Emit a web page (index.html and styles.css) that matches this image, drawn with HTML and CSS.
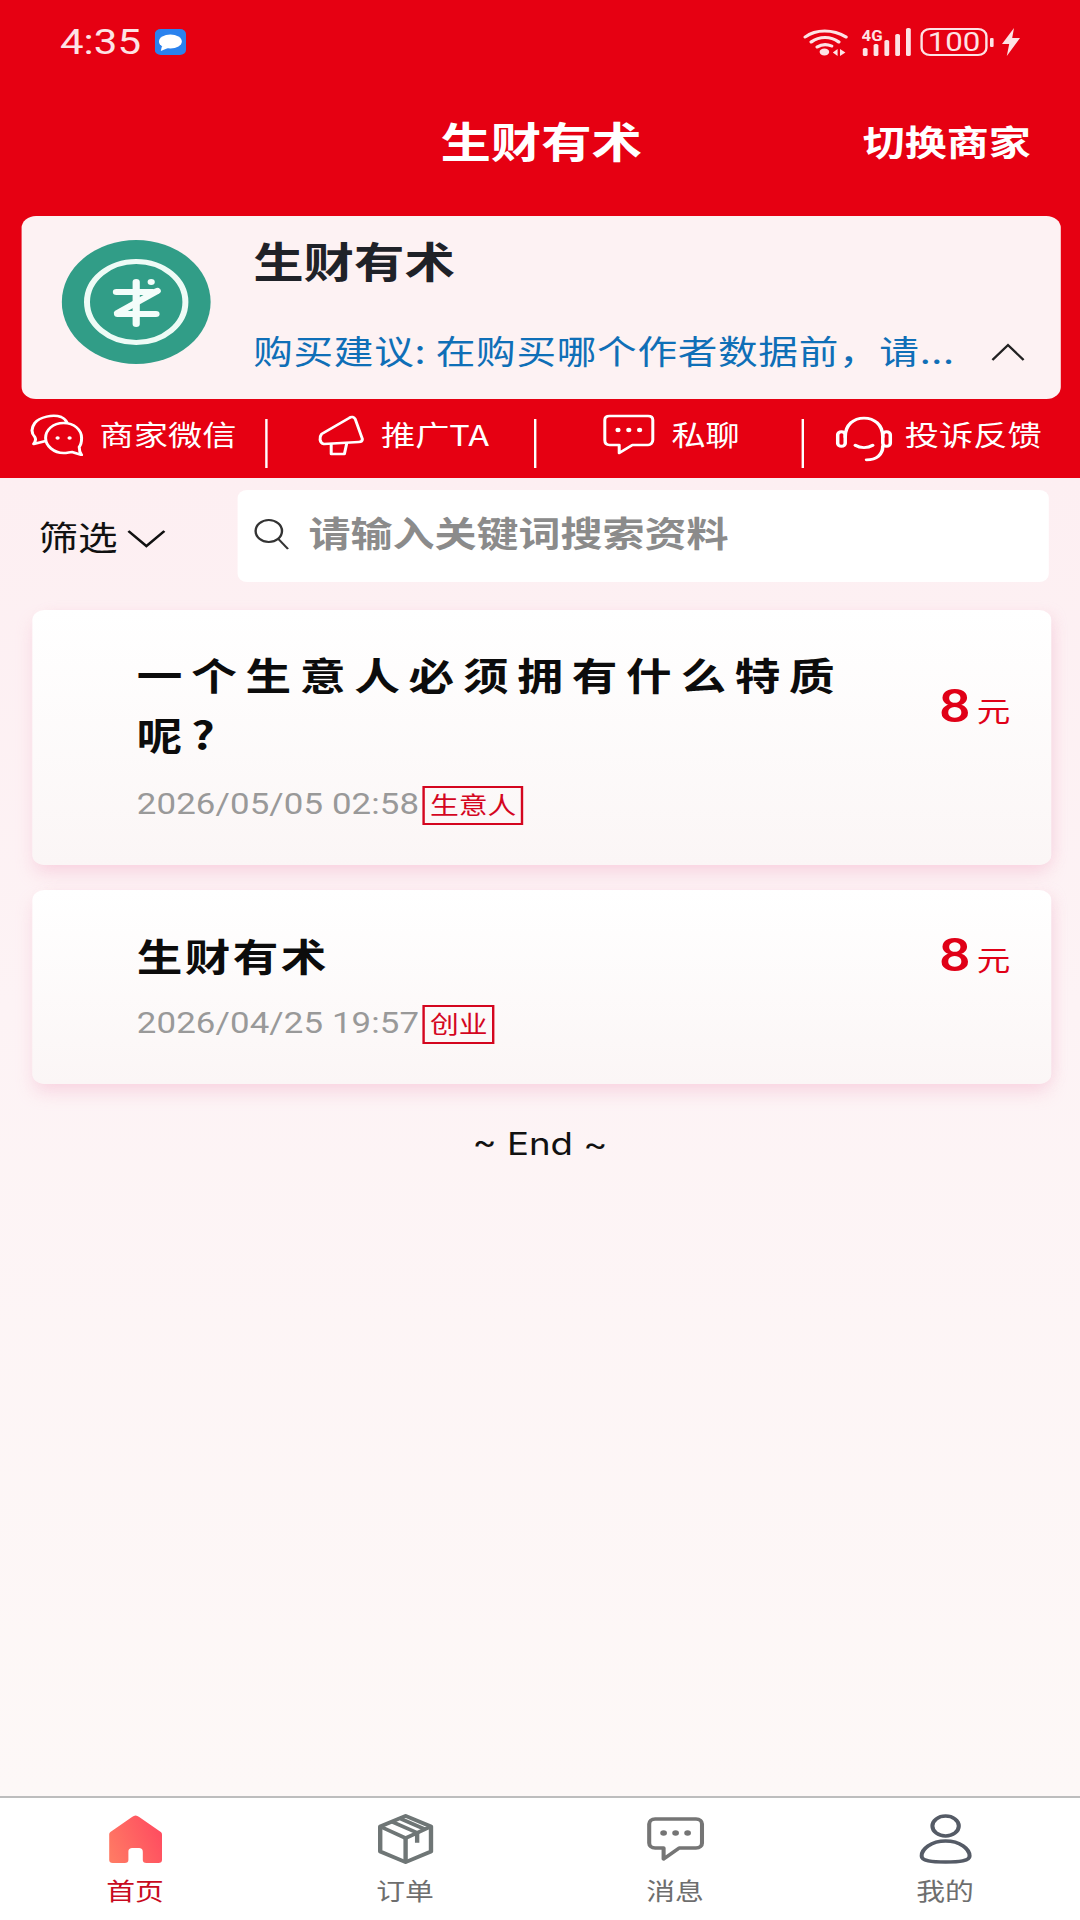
FILE: index.html
```html
<!DOCTYPE html>
<html lang="zh">
<head>
<meta charset="utf-8">
<title>生财有术</title>
<link rel="stylesheet" href="styles.css">
</head>
<body>
<div class="stage">
  <header class="top">
    <div class="status">
      <div class="status-left">
        <span class="time">4:35</span>
        <svg class="msg" viewBox="0 0 26 26"><rect width="26" height="26" rx="5" fill="#2a82ee"/><ellipse cx="13" cy="12.5" rx="9.5" ry="7" fill="#fff"/><path d="M6 17 L5 22 L11 19Z" fill="#fff"/></svg>
      </div>
      <div class="status-right">
        <svg class="wifi" viewBox="0 0 38 28" fill="none" stroke="#fde3e5" stroke-linecap="round"><path d="M2 9 C11 1 25 1 36 9" stroke-width="3"/><path d="M7 14 C14 8 23 8 30 14" stroke-width="3"/><path d="M12 19 C16 16 20 16 24 18" stroke-width="3"/><ellipse cx="18" cy="24" rx="4" ry="3.4" fill="#fde3e5" stroke="none"/><path d="M29 21 L25 24.500 L29 28Z M31 21 L35.500 24.500 L31 28Z" fill="#fde3e5" stroke="none"/></svg>
        <svg class="signal" viewBox="0 0 44 28"><text x="0" y="13" class="sig-text">4G</text><rect x="1" y="20" width="4" height="8" rx="1.500" fill="#fde3e5"/><rect x="10" y="16" width="4" height="12" rx="1.500" fill="#fde3e5"/><rect x="19" y="12" width="4" height="16" rx="1.500" fill="#fde3e5"/><rect x="28" y="6" width="4" height="22" rx="1.500" fill="#fde3e5"/><rect x="37" y="0" width="4" height="28" rx="1.500" fill="#fde3e5"/></svg>
        <div class="battery"><span class="battery-num">100</span></div>
        <span class="nub"></span>
        <svg class="bolt" viewBox="0 0 15 28"><path d="M10 0 L0 16 L6 16 L4 28 L15 10 L8.500 10Z" fill="#fde3e5"/></svg>
      </div>
    </div>
    <div class="nav">
      <span></span>
      <h1 class="nav-title">生财有术</h1>
      <span class="nav-switch">切换商家</span>
    </div>
    <section class="shop">
      <svg class="logo" viewBox="0 0 125 124">
        <circle cx="62.500" cy="62" r="62" fill="#319d87"/>
        <ellipse cx="62.500" cy="62" rx="41" ry="40.500" fill="none" stroke="#eefbf6" stroke-width="5"/>
        <g stroke="#f3fdfa" stroke-width="6" stroke-linecap="round" fill="none">
          <path d="M46 52 H76"/><path d="M47 74 H79"/><path d="M62.500 42 V84"/><path d="M80 51 L47 73"/>
        </g>
        <circle cx="75" cy="42" r="3" fill="#f3fdfa"/>
      </svg>
      <div class="shop-body">
        <h2 class="shop-name">生财有术</h2>
        <div class="shop-desc-row">
          <span class="shop-desc">购买建议: 在购买哪个作者数据前，请...</span>
          <svg class="chev-up" viewBox="0 0 28 18" fill="none" stroke="#222" stroke-width="2"><path d="M1 17 L14 2 L27 17"/></svg>
        </div>
      </div>
    </section>
    <nav class="actions">
      <div class="action">
        <svg class="a-ic1" viewBox="0 0 46 42" fill="none" stroke="#fff" stroke-width="2.500" stroke-linejoin="round"><path d="M14 27 L4 30 C6 27 6 25 5 23 C2 19 2 14 5 9 C9 3 20 0 27 3 C29 4 31 6 32 9"/><path d="M29 9 C20 9 14 16 14 24 C14 32 21 39 29 39 C32 39 34 38 36 38 L44 41 C42 38 42 35 42 33 C44 30 44 27 44 24 C44 16 38 9 29 9Z"/><circle cx="24" cy="24" r="1.800" fill="#fff" stroke="none"/><circle cx="34" cy="24" r="1.800" fill="#fff" stroke="none"/></svg>
        <span>商家微信</span>
      </div>
      <div class="action shifted">
        <svg class="a-ic2" viewBox="0 0 40 42" fill="none" stroke="#fff" stroke-width="2.500" stroke-linejoin="round"><path d="M4 20 L27 4 C29 2 31 3 32 5 L38 25 C38 27 37 28 35 28 L6 30 C2 29 2 23 4 20Z"/><path d="M12 30 L12 40 L23 40 L25 29"/></svg>
        <span>推广TA</span>
      </div>
      <div class="action shifted">
        <svg class="a-ic3" viewBox="0 0 44 42" fill="none" stroke="#fff" stroke-width="2.500" stroke-linejoin="round"><path d="M6 2 H38 C41 2 42 4 42 6 V26 C42 29 40 31 38 31 H25 L14 39 V31 H6 C3 31 2 29 2 26 V6 C2 4 3 2 6 2Z"/><circle cx="13" cy="16" r="2.200" fill="#fff" stroke="none"/><circle cx="22" cy="16" r="2.200" fill="#fff" stroke="none"/><circle cx="31" cy="16" r="2.200" fill="#fff" stroke="none"/></svg>
        <span>私聊</span>
      </div>
      <div class="action last">
        <svg class="a-ic4" viewBox="0 0 46 44" fill="none" stroke="#fff" stroke-width="2.800" stroke-linecap="round"><path d="M8 20 C8 8 15 2 23 2 C31 2 38 8 38 20"/><rect x="2" y="15" width="6" height="14" rx="3"/><rect x="38" y="15" width="6" height="14" rx="3"/><path d="M16 28 C20 31 26 31 30 28"/><path d="M38 29 C38 37 33 42 25 42"/></svg>
        <span>投诉反馈</span>
      </div>
    </nav>
  </header>

  <main class="main">
    <div class="search-row">
      <div class="filter">
        <span>筛选</span>
        <svg class="chev-down" viewBox="0 0 32 18" fill="none" stroke="#111" stroke-width="2.400"><path d="M1 1 L16 16 L31 1"/></svg>
      </div>
      <div class="search">
        <svg class="search-ic" viewBox="0 0 30 32" fill="none" stroke="#333" stroke-width="2"><ellipse cx="13" cy="13" rx="11" ry="11"/><path d="M21 21 L29 31"/></svg>
        <span class="placeholder">请输入关键词搜索资料</span>
      </div>
    </div>

    <article class="card">
      <div class="card-head">
        <h3 class="card-title spaced">一个生意人必须拥有什么特质呢?</h3>
        <div class="price"><span class="price-num">8</span><span class="price-unit">元</span></div>
      </div>
      <div class="meta"><span class="date">2026/05/05 02:58</span><span class="tag">生意人</span></div>
    </article>

    <article class="card">
      <div class="card-head">
        <h3 class="card-title">生财有术</h3>
        <div class="price"><span class="price-num">8</span><span class="price-unit">元</span></div>
      </div>
      <div class="meta"><span class="date">2026/04/25 19:57</span><span class="tag">创业</span></div>
    </article>

    <p class="end">~ End ~</p>
  </main>

  <footer class="tabs">
    <div class="tab active">
      <svg class="tab-ic ic-home" viewBox="0 0 46 50"><defs><linearGradient id="home" x1="0" x2="1" y1="0.800" y2="0.400"><stop offset="0" stop-color="#ff7a64"/><stop offset="1" stop-color="#ff4d60"/></linearGradient></defs><path d="M20 3 C22 1 24 1 26 3 L44 18 C45 19 45 20 45 21 V46 C45 48 44 49 42 49 H32 C30 49 29 48 29 46 V38 C29 35 28 34 25 34 H21 C18 34 17 35 17 38 V46 C17 48 16 49 14 49 H4 C2 49 1 48 1 46 V21 C1 20 1 19 2 18Z" fill="url(#home)"/></svg>
      <span>首页</span>
    </div>
    <div class="tab">
      <svg class="tab-ic ic-box" viewBox="0 0 50 52" fill="none" stroke="#6f7676" stroke-width="3.800" stroke-linejoin="round"><path d="M25 2 L47 13 V39 L25 50 L3 39 V13Z"/><path d="M3 13 L25 25 L47 13"/><path d="M25 25 V50"/><path d="M13 8 L35 19.500 V30"/><path d="M21 5 L42 16"/></svg>
      <span>订单</span>
    </div>
    <div class="tab">
      <svg class="tab-ic ic-msg" viewBox="0 -2 48 50" fill="none" stroke="#757575" stroke-width="3.400" stroke-linejoin="round"><path d="M7 3 H41 C44 3 46 5 46 8 V27 C46 30 44 32 41 32 H27 L14 43 V32 H7 C4 32 2 30 2 27 V8 C2 5 4 3 7 3Z"/><circle cx="14" cy="17" r="2.800" fill="#757575" stroke="none"/><circle cx="24" cy="17" r="2.800" fill="#757575" stroke="none"/><circle cx="34" cy="17" r="2.800" fill="#757575" stroke="none"/></svg>
      <span>消息</span>
    </div>
    <div class="tab">
      <svg class="tab-ic ic-user" viewBox="0 0 44 50" fill="none" stroke="#555b66" stroke-width="3.400"><ellipse cx="22" cy="12" rx="11" ry="10"/><path d="M22 27 C10 27 2 35 2 42 C2 47 10 48 22 48 C34 48 42 47 42 42 C42 35 34 27 22 27Z"/></svg>
      <span>我的</span>
    </div>
  </footer>
</div>
</body>
</html>
```
FILE: styles.css
```css
* { box-sizing: border-box; }
html, body { margin: 0; padding: 0; width: 1080px; height: 1920px; overflow: hidden; }
body { font-family: "Noto Sans CJK SC", "Noto Sans", sans-serif; background: #fff; }
h1, h2, h3, p { margin: 0; }

/* The capture is stretched 1.2x horizontally: lay out at 900 wide, then widen */
.stage {
  width: 900px; height: 1920px;
  display: flex; flex-direction: column;
  transform: scale(1.2, 1); transform-origin: 0 0;
}

.top { background: #e60012; height: 478px; flex: none; color: #fff; }

.status { height: 82px; display: flex; justify-content: space-between; align-items: center; padding: 2px 50px 0 50px; }
.status-left { display: flex; align-items: center; gap: 11px; }
.time { font-family: Roboto, sans-serif; font-size: 35px; color: #fde3e5; line-height: 1; }
.msg { width: 26px; height: 26px; }
.status-right { display: flex; align-items: center; }
.wifi { width: 38px; height: 28px; margin-right: 11px; }
.signal { width: 44px; height: 28px; margin-right: 5px; }
.sig-text { font: 700 14px Roboto, sans-serif; fill: #fde3e5; }
.battery { width: 56px; height: 28px; border: 2px solid #fde3e5; border-radius: 8px; display: flex; align-items: center; justify-content: center; }
.battery-num { font-family: Roboto, sans-serif; font-size: 26px; color: #fde3e5; line-height: 1; }
.nub { width: 3px; height: 9px; background: #fde3e5; margin: 0 7px 0 2px; border-radius: 1px; }
.bolt { width: 15px; height: 28px; }

.nav { height: 116px; display: grid; grid-template-columns: 1fr auto 1fr; align-items: center; padding: 0 41px; }
.nav-title { font-size: 42px; font-weight: 700; line-height: 116px; color: #fff; padding-left: 2px; }
.nav-switch { font-size: 35px; font-weight: 700; justify-self: end; color: #fff; }

.shop { margin: 18px 0 0 18px; width: 866px; height: 183px; background: #fdf2f3; border-radius: 12px; display: flex; align-items: flex-start; color: #1f2228; }
.logo { width: 125px; height: 124px; margin: 24px 35px 0 33px; flex: none; }
.shop-body { flex: 1; min-width: 0; }
.shop-name { font-size: 42px; font-weight: 700; line-height: 60px; margin-top: 14px; }
.shop-desc-row { display: flex; align-items: center; margin-top: 36px; height: 48px; }
.shop-desc { font-size: 33px; color: #0f6fb7; line-height: 48px; white-space: nowrap; letter-spacing: .6px; }
.chev-up { width: 28px; height: 18px; margin-left: auto; margin-right: 30px; margin-top: 4px; }

.actions { height: 77px; display: grid; grid-template-columns: 223px 224px 223px 1fr; align-items: start; padding-top: 20px; }
.action { height: 49px; display: flex; justify-content: center; align-items: flex-start; gap: 13px; border-right: 2px solid #fff; font-size: 28.500px; line-height: 32px; color: #fff; }
.action.last { border-right: 0; padding-right: 6px; gap: 10px; }
.action.shifted { padding-left: 4px; }
.action span { white-space: nowrap; margin-top: -1px; }
.action svg { margin-top: -5px; flex: none; }
.a-ic1 { width: 46px; height: 42px; }
.a-ic2 { width: 40px; height: 42px; }
.a-ic3 { width: 44px; height: 42px; }
.action .a-ic4 { width: 48px; height: 46px; margin-top: -3px; }

.main { flex: 1; min-height: 0; background: linear-gradient(180deg, #fdeff2 0%, #fdf3f5 40%, #fdf8f7 100%); padding-top: 12px; }
.search-row { display: flex; align-items: center; padding-left: 32px; height: 92px; }
.filter { display: flex; align-items: center; gap: 8px; width: 166px; font-size: 33px; color: #111; }
.chev-down { width: 32px; height: 18px; margin-top: 6px; }
.search { width: 676px; height: 92px; background: #fff; border-radius: 8px; display: flex; align-items: center; padding: 0 0 5px 13px; gap: 16px; }
.search-ic { width: 30px; height: 32px; flex: none; }
.placeholder { font-size: 35px; font-weight: 700; color: #8b8b8b; white-space: nowrap; margin-bottom: 4px; }

.card { margin: 28px 0 0 27px; width: 849px; padding: 34px 34px 40px 87px; background: linear-gradient(180deg, #fff 0%, #fbf6f6 100%); border-radius: 10px; box-shadow: 0 10px 16px -2px rgba(245, 180, 205, .45), 6px 0 12px -4px rgba(245, 190, 210, .25); }
.card + .card { margin-top: 25px; }
.card-head { display: flex; align-items: center; justify-content: space-between; }
.card-title { font-size: 38px; font-weight: 700; line-height: 61px; color: #0c0c0c; letter-spacing: 2px; }
.card-title.spaced { width: 620px; letter-spacing: 7.300px; line-height: 60px; margin-bottom: 2px; }
.price { display: flex; align-items: baseline; gap: 5px; color: #e00017; line-height: 1; }
.price-num { font-family: Roboto, sans-serif; font-weight: 500; font-size: 47px; }
.price-unit { font-size: 28px; }
.meta { display: flex; align-items: center; gap: 3px; margin-top: 19px; height: 40px; }
.date { font-family: Roboto, sans-serif; font-size: 29px; color: #999; white-space: nowrap; letter-spacing: .1px; padding-bottom: 2px; }
.tag { border: 2px solid #d4061f; color: #d4061f; font-size: 24px; line-height: 31px; padding: 0 4px 4px; white-space: nowrap; }

.end { text-align: center; font-family: Inter, sans-serif; font-size: 30.500px; line-height: 44px; margin-top: 38px; color: #111; }

.tabs { height: 124px; flex: none; background: #fff; border-top: 2px solid #bdbdbd; display: grid; grid-template-columns: repeat(4, 1fr); }
.tab { display: flex; flex-direction: column; align-items: center; font-size: 24px; line-height: 32px; color: #6e6e6e; padding-top: 16px; }
.tab.active { color: #c80a20; }
.tab-ic { height: 50px; margin-bottom: 10px; flex: none; }
.ic-home { width: 46px; }
.ic-box { width: 50px; }
.ic-msg { width: 48px; }
.ic-user { width: 44px; }
```
